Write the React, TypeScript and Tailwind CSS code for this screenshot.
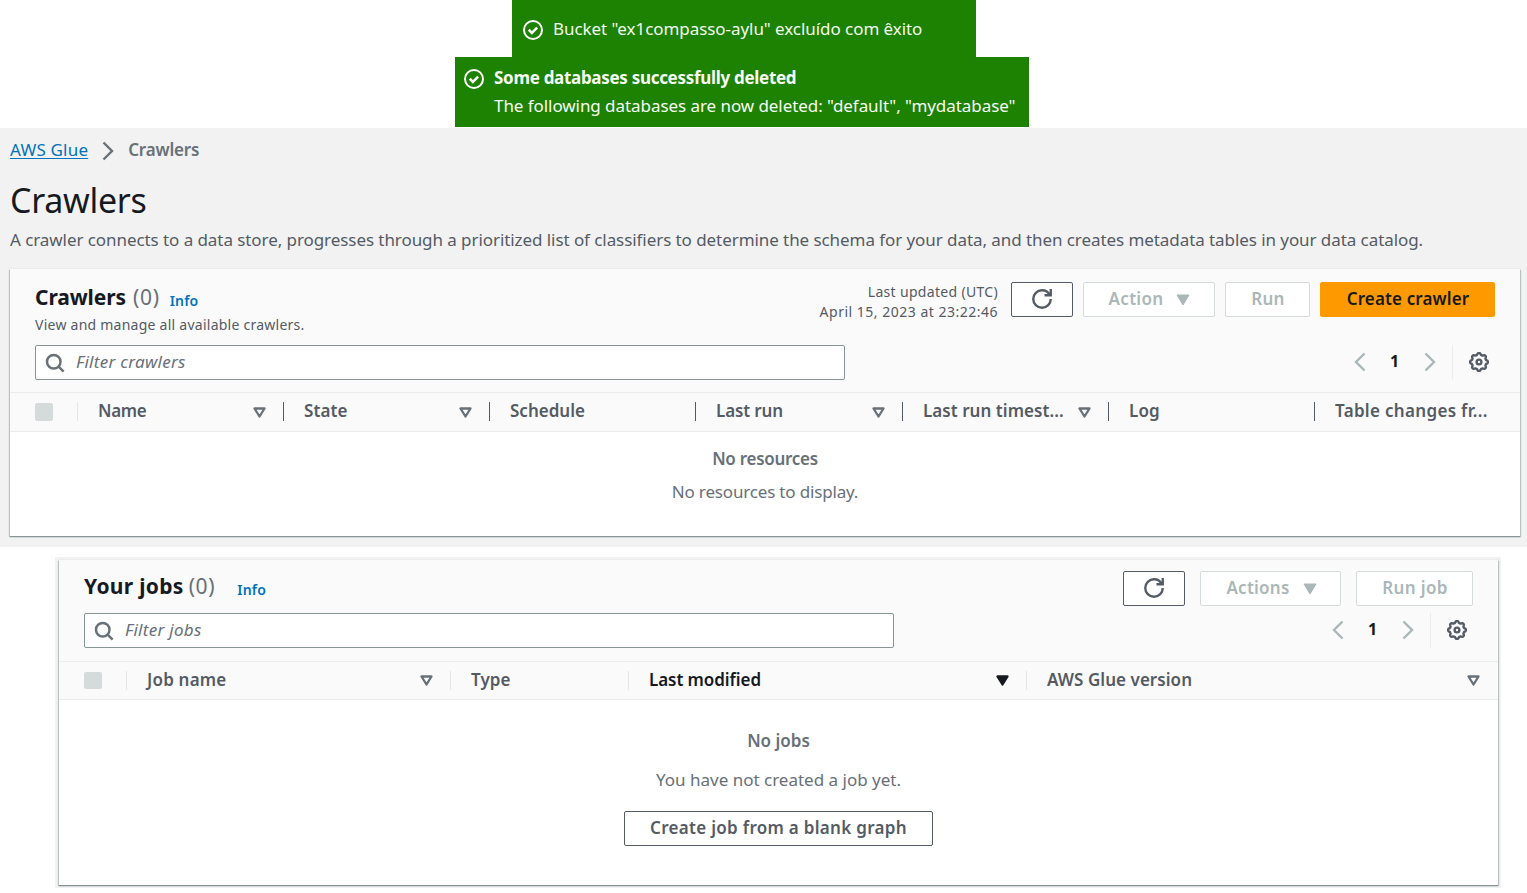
import type { ReactNode } from 'react';

function CheckCircle() {
  return (
    <svg className="size-5 shrink-0" viewBox="0 0 16 16" fill="none" stroke="#fff" strokeWidth="1.6">
      <circle cx="8" cy="8" r="7.2" />
      <path d="m4.6 7.8 2.5 2.5 4.2-4.2" strokeWidth="2" />
    </svg>
  );
}

function SearchIcon() {
  return (
    <svg className="size-5 shrink-0" viewBox="0 0 16 16" fill="none" stroke="#687078" strokeWidth="2">
      <circle cx="7" cy="7" r="5.4" />
      <path d="m10.9 10.9 4 4" />
    </svg>
  );
}

function RefreshIcon() {
  return (
    <svg className="mb-[2px] size-5" viewBox="0 0 16 16" fill="none" stroke="#545b64" strokeWidth="1.9">
      <path d="M10 5h5V0" />
      <path d="M15 8a6.957 6.957 0 0 1-7 7 6.957 6.957 0 0 1-7-7 6.957 6.957 0 0 1 7-7 6.87 6.87 0 0 1 6.3 4" />
    </svg>
  );
}

const GEAR = Array.from({ length: 96 }, (_, i) => {
  const a = (i / 96) * Math.PI * 2;
  const r = 6.45 + 0.65 * Math.max(-1, Math.min(1, 1.5 * Math.cos(8 * a)));
  return `${i ? 'L' : 'M'}${(8 + r * Math.sin(a)).toFixed(2)} ${(8 - r * Math.cos(a)).toFixed(2)}`;
}).join('') + 'Z';

function GearIcon() {
  return (
    <svg className="size-5" viewBox="0 0 16 16" fill="none" stroke="#545b64" strokeWidth="1.9" strokeLinejoin="round">
      <path d={GEAR} />
      <circle cx="8" cy="8" r="1.9" />
    </svg>
  );
}

function Chevron({ className }: { className: string }) {
  return (
    <svg className={className} viewBox="0 0 12 20" fill="none" stroke="currentColor" strokeWidth="2.4">
      <path d="m1.5 1.5 8.5 8.5-8.5 8.5" />
    </svg>
  );
}

function SortIcon({ active = false }: { active?: boolean }) {
  return (
    <svg className="-mr-px h-[11px] w-[13px] shrink-0" viewBox="0 0 13 11" strokeLinejoin="round" strokeWidth="2.3">
      <path
        d="M1.5 1.5h10l-5 8z"
        fill={active ? '#16191f' : 'none'}
        stroke={active ? '#16191f' : '#687078'}
      />
    </svg>
  );
}

function Caret() {
  return (
    <svg className="h-[12px] w-[14px]" viewBox="0 0 14 12" fill="#aab7b8" stroke="#aab7b8" strokeLinejoin="round">
      <path d="M1 1h12L7 11z" />
    </svg>
  );
}

function Button({ className, children }: { className: string; children: ReactNode }) {
  return (
    <button className={`flex h-[35px] shrink-0 items-center justify-center rounded-[2px] border font-semibold leading-[24px] ${className}`}>
      {children}
    </button>
  );
}

function Filter({ placeholder, className }: { placeholder: string; className: string }) {
  return (
    <div className="flex h-[35px] w-[810px] items-center gap-[11px] rounded-[2px] border border-[#879596] bg-white pl-[9px]">
      <SearchIcon />
      <span className={`italic text-[#687078] ${className}`}>{placeholder}</span>
    </div>
  );
}

function Pager() {
  return (
    <div className="flex h-[35px] items-center text-[#aab7b8]">
      <Chevron className="mb-[2px] h-5 w-3 -scale-x-100" />
      <span className="w-[57px] pb-[3px] text-center text-[16px] font-bold text-[#16191f]">1</span>
      <Chevron className="mb-[2px] ml-px h-5 w-3" />
      <span className="ml-4 mr-4 h-[35px] w-px bg-[#eaeded]" />
      <span className="pb-[2px]"><GearIcon /></span>
    </div>
  );
}

function Column({ label, width, divider, sort, labelClass }: {
  label: string; width: string; divider: string; sort?: 'idle' | 'active'; labelClass: string;
}) {
  return (
    <div className={`flex h-full shrink-0 items-center ${width}`}>
      <span className={`mb-px h-[19px] w-px shrink-0 ${divider}`} />
      <span className={`ml-5 grow whitespace-nowrap font-semibold ${labelClass}`}>{label}</span>
      {sort && <SortIcon active={sort === 'active'} />}
    </div>
  );
}

const LIGHT = 'bg-[#e3e7e7]';
const DARK = 'bg-[#545b64]';

export default function App() {
  return (
    <div className="h-[893px] w-[1527px] overflow-hidden bg-white font-['Noto_Sans',sans-serif] text-[17px] leading-[24px] text-[#545b64]">
      <div className="ml-[512px] flex h-[57px] w-[464px] items-center gap-[10px] bg-[#1d8102] pl-[11px] pt-[2px] text-[#f2fbee]">
        <CheckCircle />
        <span className="pb-px tracking-[-0.06px]">Bucket "ex1compasso-aylu" excluído com êxito</span>
      </div>
      <div className="ml-[455px] flex h-[70px] w-[574px] gap-[10px] bg-[#1d8102] pl-[9px] pt-[7px] text-[#f7fdf5]">
        <div className="pt-[5px]"><CheckCircle /></div>
        <div className="leading-[28px]">
          <div className="font-bold tracking-[-0.3px]">Some databases successfully deleted</div>
          <div className="tracking-[-0.06px]">The following databases are now deleted: "default", "mydatabase"</div>
        </div>
      </div>

      <section className="mt-px h-[419px] bg-[#f2f2f2] pl-[10px] pt-[10px]">
        <nav className="flex items-center">
          <a className="tracking-[0.2px] text-[#0073bb] underline underline-offset-2">AWS Glue</a>
          <Chevron className="ml-[14px] mt-[2px] h-5 w-3 text-[#687078]" />
          <span className="ml-[14px] font-semibold tracking-[-0.18px] text-[#687078]">Crawlers</span>
        </nav>
        <h1 className="mt-[18px] text-[34px] leading-[40px] tracking-[-0.3px] text-[#16191f]">Crawlers</h1>
        <p className="mt-[8px] whitespace-nowrap tracking-[-0.07px]">
          A crawler connects to a data store, progresses through a prioritized list of classifiers to determine the schema for your data, and then creates metadata tables in your data catalog.
        </p>

        <div className="mt-[17px] h-[267px] w-[1510px] bg-white shadow-[0_1px_1px_0_#879596,1px_1px_1px_0_#c3cacb,-1px_1px_1px_0_#c3cacb,0_0_1px_1px_#eaeded]">
          <div className="h-[124px] border-b border-[#eaeded] bg-[#fafafa] pl-[25px] pr-[25px] pt-[13px]">
            <div className="flex h-[63px] justify-between">
              <div>
                <div className="flex items-baseline pt-px leading-[28px]">
                  <h2 className="text-[21px] font-bold tracking-[-0.1px] text-[#16191f]">Crawlers</h2>
                  <span className="ml-[7px] text-[21px] tracking-[0.7px] text-[#687078]">(0)</span>
                  <a className="relative top-px ml-[10px] text-[14px] font-semibold tracking-[0.2px] text-[#0073bb]">Info</a>
                </div>
                <p className="text-[14px] leading-[22px] tracking-[0.25px]">View and manage all available crawlers.</p>
              </div>
              <div className="flex gap-[10px]">
                <div className="mr-[3px] text-right text-[14px] leading-[20px]">
                  <div className="tracking-[0.32px]">Last updated (UTC)</div>
                  <div className="tracking-[0.5px]">April 15, 2023 at 23:22:46</div>
                </div>
                <Button className="w-[62px] border-[#545b64] bg-white"><RefreshIcon /></Button>
                <Button className="w-[132px] gap-[13px] border-[#d5dbdb] bg-white pl-px text-[#aab7b8]">
                  <span className="pb-px tracking-[0.3px]">Action</span><Caret />
                </Button>
                <Button className="w-[85px] border-[#d5dbdb] bg-white pl-px text-[#aab7b8]">
                  <span className="pb-px tracking-[0.3px]">Run</span>
                </Button>
                <Button className="w-[175px] border-[#ff9900] bg-[#ff9900] pl-px text-[#16191f]">
                  <span className="pb-px tracking-[0.12px]">Create crawler</span>
                </Button>
              </div>
            </div>
            <div className="-mt-px flex justify-between pr-[6px] pt-px">
              <Filter placeholder="Filter crawlers" className="pb-[2px] tracking-[0.3px]" />
              <Pager />
            </div>
          </div>
          <div className="flex h-[39px] items-center border-b border-[#eaeded] bg-[#fafafa] pl-[25px]">
            <span className="mr-6 size-[18px] shrink-0 rounded-[2px] bg-[#d5dbdb]" />
            <Column label="Name" width="w-[188px]" divider={LIGHT} sort="idle" labelClass="pb-[3px] tracking-[-0.35px]" />
            <span className="w-[18px]" />
            <Column label="State" width="w-[188px]" divider={DARK} sort="idle" labelClass="pb-[3px] tracking-[0.1px]" />
            <span className="w-[18px]" />
            <Column label="Schedule" width="w-[206px]" divider={DARK} labelClass="pb-[3px]" />
            <Column label="Last run" width="w-[189px]" divider={DARK} sort="idle" labelClass="pb-[3px] tracking-[-0.13px]" />
            <span className="w-[18px]" />
            <Column label="Last run timest..." width="w-[188px]" divider={DARK} sort="idle" labelClass="pb-[3px] tracking-[0.05px]" />
            <span className="w-[18px]" />
            <Column label="Log" width="w-[206px]" divider={DARK} labelClass="pb-[3px] tracking-[0.1px]" />
            <Column label="Table changes fr..." width="w-[200px]" divider={DARK} labelClass="pb-[3px] tracking-[0.32px]" />
          </div>
          <div className="pt-[15px] text-center text-[#687078]">
            <div className="font-semibold tracking-[-0.28px]">No resources</div>
            <div className="mt-[9px] tracking-[-0.17px]">No resources to display.</div>
          </div>
        </div>
      </section>

      <section className="ml-[55px] mt-[10px] h-[331px] w-[1446px] bg-[#f2f2f2] pl-[4px] pt-[3px]">
        <div className="h-[325px] w-[1439px] bg-white shadow-[0_1px_1px_0_#879596,1px_1px_1px_0_#c3cacb,-1px_1px_1px_0_#c3cacb,0_0_1px_1px_#eaeded]">
          <div className="h-[102px] border-b border-[#eaeded] bg-[#fafafa] pl-[25px] pr-[25px] pt-[11px]">
            <div className="flex h-[42px] justify-between">
              <div className="flex items-baseline pt-px leading-[28px]">
                <h2 className="text-[21px] font-bold tracking-[0.3px] text-[#16191f]">Your jobs</h2>
                <span className="ml-[5px] text-[21px] tracking-[0.7px] text-[#687078]">(0)</span>
                <a className="relative top-px ml-[22px] text-[14px] font-semibold tracking-[0.2px] text-[#0073bb]">Info</a>
              </div>
              <div className="flex gap-[15px]">
                <Button className="w-[62px] border-[#545b64] bg-white"><RefreshIcon /></Button>
                <Button className="w-[141px] gap-[13px] border-[#d5dbdb] bg-white pl-[2px] text-[#aab7b8]">
                  <span className="pb-px tracking-[0.25px]">Actions</span><Caret />
                </Button>
                <Button className="w-[117px] border-[#d5dbdb] bg-white pl-px text-[#aab7b8]">
                  <span className="pb-px tracking-[0.35px]">Run job</span>
                </Button>
              </div>
            </div>
            <div className="flex justify-between pr-[6px]">
              <Filter placeholder="Filter jobs" className="pb-px tracking-[0.3px]" />
              <Pager />
            </div>
          </div>
          <div className="flex h-[38px] items-center border-b border-[#eaeded] bg-[#fafafa] pl-[25px]">
            <span className="mb-px mr-6 h-[17px] w-[18px] shrink-0 rounded-[2px] bg-[#d5dbdb]" />
            <Column label="Job name" width="w-[306px]" divider={LIGHT} sort="idle" labelClass="pb-px tracking-[0.2px]" />
            <span className="w-[18px]" />
            <Column label="Type" width="w-[178px]" divider={LIGHT} labelClass="pb-px tracking-[0.1px]" />
            <Column label="Last modified" width="w-[380px]" divider={LIGHT} sort="active" labelClass="pb-px tracking-[-0.07px] text-[#16191f]" />
            <span className="w-[18px]" />
            <Column label="AWS Glue version" width="w-[453px]" divider={LIGHT} sort="idle" labelClass="pb-px tracking-[0.05px]" />
          </div>
          <div className="flex flex-col items-center pt-[29px] text-[#687078]">
            <div className="font-semibold">No jobs</div>
            <div className="mt-[15px]">You have not created a job yet.</div>
            <Button className="mt-[19px] w-[309px] border-[#545b64] bg-white text-[#545b64]">
              <span className="pb-px tracking-[0.3px]">Create job from a blank graph</span>
            </Button>
          </div>
        </div>
      </section>
    </div>
  );
}
